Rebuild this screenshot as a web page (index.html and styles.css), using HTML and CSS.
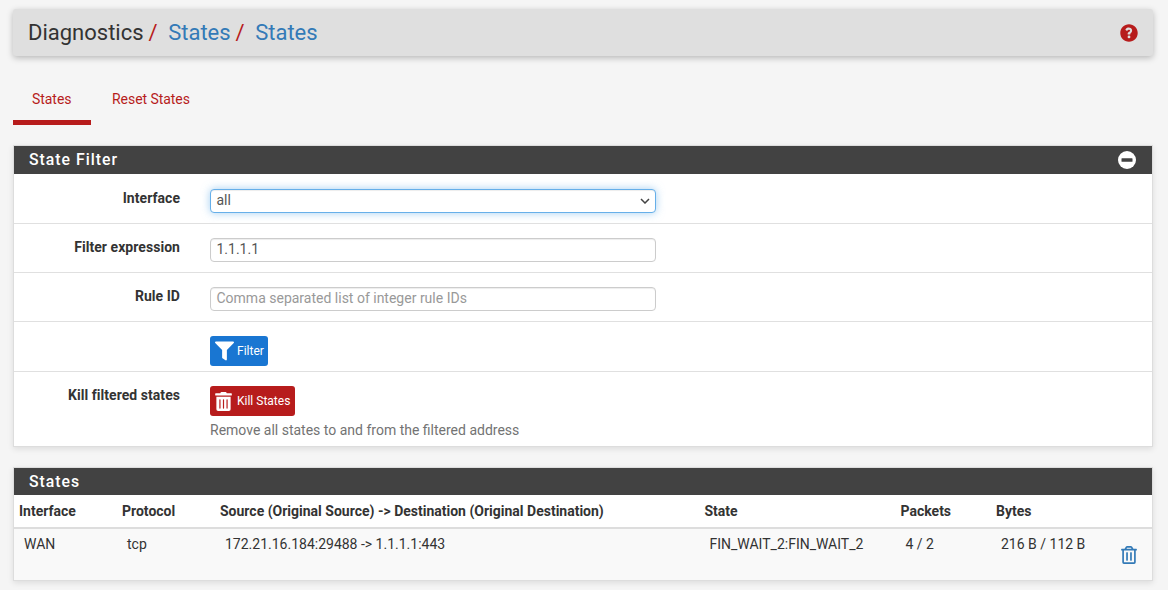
FILE: index.html
```html
<!DOCTYPE html>
<html lang="en">
<head>
<meta charset="utf-8">
<title>Diagnostics: States: States</title>
<link rel="stylesheet" href="styles.css">
</head>
<body>
<header class="crumbs">
  <h1 class="crumb-title"><span>Diagnostics</span><i class="sep">/</i><a href="#">States</a><i class="sep">/</i><a href="#">States</a></h1>
  <svg class="help" viewBox="0 0 512 512" aria-hidden="true"><path fill="#b71c1c" d="M256 8C119 8 8 119 8 256s111 248 248 248 248-111 248-248S393 8 256 8zm0 400a40 40 0 1 1 0-80 40 40 0 0 1 0 80zm38-126v6c0 7-5 12-12 12h-52c-7 0-12-5-12-12v-12c0-33 25-46 44-57 16-9 26-15 26-27 0-16-20-26-36-26-21 0-31 10-44 27-4 5-12 6-17 2l-32-24c-5-4-6-11-3-16 22-33 50-52 94-52 46 0 95 36 95 83 0 63-51 72-51 96z"/></svg>
</header>

<nav class="tabs">
  <a class="tab active" href="#">States</a>
  <a class="tab" href="#">Reset States</a>
</nav>

<section class="panel">
  <div class="panel-head">
    <h2>State Filter</h2>
    <svg class="collapse" viewBox="0 0 18 18" aria-hidden="true"><circle cx="9" cy="9" r="9" fill="#fff"/><rect x="3.5" y="7.2" width="11" height="3.6" rx=".6" fill="#424242"/></svg>
  </div>
  <div class="form-row">
    <label class="form-label">Interface</label>
    <div class="form-field">
      <div class="select"><span>all</span><svg viewBox="0 0 10 6" aria-hidden="true"><path d="M1 1l4 4 4-4" fill="none" stroke="#444" stroke-width="1.5"/></svg></div>
    </div>
  </div>
  <div class="form-row">
    <label class="form-label">Filter expression</label>
    <div class="form-field"><div class="input">1.1.1.1</div></div>
  </div>
  <div class="form-row">
    <label class="form-label">Rule ID</label>
    <div class="form-field"><div class="input placeholder">Comma separated list of integer rule IDs</div></div>
  </div>
  <div class="form-row">
    <div class="form-label"></div>
    <div class="form-field">
      <button class="btn btn-blue" type="button">
        <svg class="btn-icon icon-funnel" viewBox="0 0 512 512" aria-hidden="true"><path fill="#fff" d="M487 0H25C3 0-9 27 7 43l185 184v205c0 8 4 15 10 20l80 56c16 11 38 0 38-20V227L505 43c16-16 4-43-18-43z"/></svg>
        Filter
      </button>
    </div>
  </div>
  <div class="form-row last">
    <label class="form-label">Kill filtered states</label>
    <div class="form-field">
      <button class="btn btn-red" type="button">
        <svg class="btn-icon icon-bin" viewBox="0 0 448 512" aria-hidden="true"><path fill="#fff" d="M32 464a48 48 0 0 0 48 48h288a48 48 0 0 0 48-48V128H32zm272-256a16 16 0 0 1 32 0v224a16 16 0 0 1-32 0zm-96 0a16 16 0 0 1 32 0v224a16 16 0 0 1-32 0zm-96 0a16 16 0 0 1 32 0v224a16 16 0 0 1-32 0zM432 32H312l-9-19a24 24 0 0 0-22-13H167a24 24 0 0 0-21 13l-9 19H16A16 16 0 0 0 0 48v32a16 16 0 0 0 16 16h416a16 16 0 0 0 16-16V48a16 16 0 0 0-16-16z"/></svg>
        Kill States
      </button>
      <p class="hint">Remove all states to and from the filtered address</p>
    </div>
  </div>
</section>

<section class="panel panel-states">
  <div class="panel-head"><h2>States</h2></div>
  <table class="states">
    <thead>
      <tr>
        <th class="c-if">Interface</th>
        <th class="c-proto">Protocol</th>
        <th class="c-src">Source (Original Source) -&gt; Destination (Original Destination)</th>
        <th class="c-state">State</th>
        <th class="c-pkt">Packets</th>
        <th class="c-bytes">Bytes</th>
        <th></th>
      </tr>
    </thead>
    <tbody>
      <tr>
        <td>WAN</td>
        <td>tcp</td>
        <td>172.21.16.184:29488 -&gt; 1.1.1.1:443</td>
        <td>FIN_WAIT_2:FIN_WAIT_2</td>
        <td>4 / 2</td>
        <td>216 B / 112 B</td>
        <td class="c-act"><svg class="trash" viewBox="0 0 448 512" aria-hidden="true"><path fill="#337ab7" d="M268 416h24a12 12 0 0 0 12-12V188a12 12 0 0 0-12-12h-24a12 12 0 0 0-12 12v216a12 12 0 0 0 12 12zM432 80h-82l-34-57a48 48 0 0 0-41-23H173a48 48 0 0 0-41 23L98 80H16A16 16 0 0 0 0 96v16a16 16 0 0 0 16 16h16v336a48 48 0 0 0 48 48h288a48 48 0 0 0 48-48V128h16a16 16 0 0 0 16-16V96a16 16 0 0 0-16-16zM171 51a6 6 0 0 1 5-3h96a6 6 0 0 1 5 3l18 29H153zm197 413H80V128h288zm-212-48h24a12 12 0 0 0 12-12V188a12 12 0 0 0-12-12h-24a12 12 0 0 0-12 12v216a12 12 0 0 0 12 12z"/></svg></td>
      </tr>
    </tbody>
  </table>
</section>
</body>
</html>
```
FILE: styles.css
```css
* { box-sizing: border-box; }
html, body { height: 100%; }
body {
  margin: 0;
  padding: 9px 15px 0 13px;
  background: #f5f5f5;
  color: #333;
  font: 14px/20px Roboto, "Liberation Sans", sans-serif;
  overflow: hidden;
}
a { text-decoration: none; }

.crumbs {
  height: 47px;
  display: flex;
  align-items: center;
  justify-content: space-between;
  padding: 0 15px;
  background: #dfdfdf;
  border-radius: 3px;
  box-shadow: 0 2px 6px rgba(0,0,0,.25);
}
.crumb-title { margin: 0; font-size: 22px; font-weight: 400; line-height: 28px; color: #333; }
.crumb-title a { color: #337ab7; }
.sep { font-style: normal; color: #b71c1c; margin: 0 10.5px 0 5px; }
.help { width: 18px; height: 18px; }

.tabs { display: flex; margin-top: 22px; height: 47px; }
.tab {
  padding: 11px 19px 0;
  margin-right: 2px;
  color: #b71c1c;
  font-size: 14px;
  line-height: 20px;
  letter-spacing: -.05px;
}
.tab.active { border-bottom: 5px solid #b71c1c; width: 78px; }

.panel {
  margin-top: 20px;
  width: 1140px;
  background: #fff;
  border: 1px solid #ddd;
  box-shadow: 0 2px 6px rgba(0,0,0,.1);
}
.panel-head {
  height: 28px;
  display: flex;
  align-items: center;
  justify-content: space-between;
  padding: 0 16px 0 15px;
  background: #424242;
  color: #fff;
}
.panel-states .panel-head { height: 27px; }
.panel-head h2 { margin: 0 0 1px; font-size: 15.8px; font-weight: 500; letter-spacing: 1px; line-height: 26px; }
.panel-states .panel-head h2 { margin: 1px 0 0; }
.collapse { width: 18px; height: 18px; }

.form-row {
  display: flex;
  border-top: 1px solid #e0e0e0;
  height: 49px;
}
.panel-head + .form-row { border-top: 0; padding-top: 1px; }
.form-row:nth-of-type(5) { height: 50px; }
.form-row.last { height: 75px; }
.form-label {
  flex: 0 0 166px;
  padding-top: 13px;
  text-align: right;
  font-weight: 700;
  line-height: 20px;
  letter-spacing: .05px;
  color: #333;
}
.form-field { margin-left: 30px; width: 446px; padding-top: 14px; }
.input, .select {
  height: 24px;
  display: flex;
  align-items: center;
  padding: 0 5.5px 2px;
  background: #fff;
  border: 1px solid #ccc;
  border-radius: 4px;
  color: #555;
  box-shadow: inset 0 1px 1px rgba(0,0,0,.075);
}
.placeholder { color: #999; }
.select {
  justify-content: space-between;
  border-color: #66afe9;
  box-shadow: inset 0 1px 1px rgba(0,0,0,.075), 0 0 8px rgba(102,175,233,.6);
}
.select svg { width: 10px; height: 6px; margin: 2px -.5px 0 0; }

.btn {
  display: flex;
  align-items: center;
  height: 30px;
  padding: 0 3px 0 4px;
  border: 1px solid transparent;
  border-radius: 3px;
  color: #fff;
  font: 12px/18px Roboto, "Liberation Sans", sans-serif;
}
.btn-blue { background: #1976d2; }
.btn-red { background: #b71c1c; padding-right: 4px; }
.btn-icon { height: 20px; }
.icon-funnel { width: 19px; margin-right: 3px; }
.icon-bin { width: 17px; height: 19px; margin-right: 5px; }
.hint { margin: 4px 0 0; color: #737373; line-height: 20px; }

.states { width: 100%; border-collapse: collapse; table-layout: fixed; }
.states th {
  height: 33px;
  padding: 0 5px;
  text-align: left;
  font-weight: 700;
  border-bottom: 2px solid #ddd;
  white-space: nowrap;
}
.c-if { width: 103px; }
.c-proto { width: 98px; }
.c-src { width: 484.5px; }
.c-state { width: 196px; }
.c-pkt { width: 95.5px; }
.c-bytes { width: 115px; }
.states td {
  height: 52px;
  padding: 5px 10px 0;
  vertical-align: top;
  background: #f9f9f9;
  white-space: nowrap;
}
.states td.c-act { padding: 17px 0 0 15px; }
.trash { display: block; width: 16px; height: 18px; }
```
